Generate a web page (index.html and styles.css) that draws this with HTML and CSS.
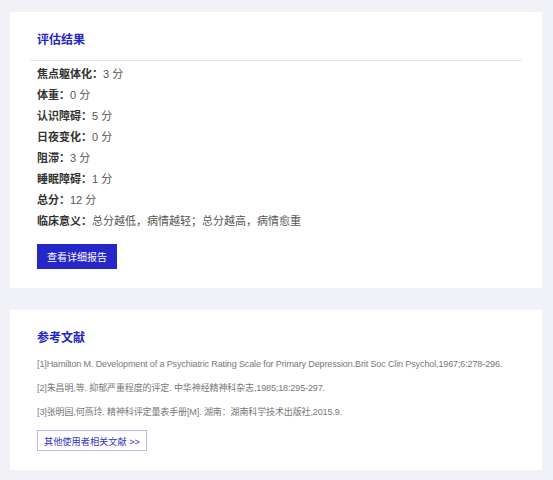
FILE: index.html
```html
<!DOCTYPE html>
<html lang="zh">
<head>
<meta charset="utf-8">
<link rel="stylesheet" href="styles.css">
</head>
<body>
<div class="page">
  <section class="card">
    <h2 class="card-title with-line">评估结果</h2>
    <div class="rows">
      <div class="row"><span class="label">焦点躯体化：</span><span class="value">3 分</span></div>
      <div class="row"><span class="label">体重：</span><span class="value">0 分</span></div>
      <div class="row"><span class="label">认识障碍：</span><span class="value">5 分</span></div>
      <div class="row"><span class="label">日夜变化：</span><span class="value">0 分</span></div>
      <div class="row"><span class="label">阻滞：</span><span class="value">3 分</span></div>
      <div class="row"><span class="label">睡眠障碍：</span><span class="value">1 分</span></div>
      <div class="row"><span class="label">总分：</span><span class="value">12 分</span></div>
      <div class="row"><span class="label">临床意义：</span><span class="value">总分越低，病情越轻；总分越高，病情愈重</span></div>
    </div>
    <button class="btn-primary">查看详细报告</button>
  </section>
  <section class="card">
    <h2 class="card-title">参考文献</h2>
    <div class="refs">
      <p class="ref">[1]Hamilton M. Development of a Psychiatric Rating Scale for Primary Depression.Brit Soc Clin Psychol,1967;6:278-296.</p>
      <p class="ref">[2]朱昌明,等. 抑郁严重程度的评定. 中华神经精神科杂志,1985;18:295-297.</p>
      <p class="ref">[3]张明园,何燕玲. 精神科评定量表手册[M]. 湖南：湖南科学技术出版社,2015.9.</p>
    </div>
    <button class="btn-outline">其他使用者相关文献 &gt;&gt;</button>
  </section>
</div>
</body>
</html>
```
FILE: styles.css
```css
* { box-sizing: border-box; }
html, body { margin: 0; padding: 0; }
body {
  background: #f1f2f7;
  font-family: "Liberation Sans", Arial, "Noto Sans CJK SC", sans-serif;
  width: 553px;
  height: 480px;
  overflow: hidden;
}
.page {
  padding: 12px 11px 10px 10px;
  display: flex;
  flex-direction: column;
  gap: 22px;
}
.card {
  background: #fff;
  padding: 20px 20px 19px;
}
.card-title {
  margin: 0;
  padding: 0 7px;
  font-size: 12px;
  line-height: 16px;
  font-weight: bold;
  color: #2424c8;
}
.card-title.with-line {
  padding-bottom: 12px;
  border-bottom: 1px solid #e6e6e6;
}
.rows {
  margin-top: 3px;
  padding: 0 7px;
}
.row {
  font-size: 11px;
  line-height: 21px;
}
.label { font-weight: bold; color: #333; }
.value { color: #555; }
.btn-primary {
  margin: 12px 0 0 7px;
  display: block;
  width: 80px;
  height: 25px;
  padding: 0;
  border: none;
  background: #2626c9;
  color: #fff;
  font-family: inherit;
  font-size: 10px;
}
.refs {
  margin-top: 6px;
  padding: 0 7px;
}
.ref {
  margin: 0;
  font-size: 9px;
  letter-spacing: -0.12px;
  line-height: 24px;
  color: #777;
  white-space: nowrap;
}
.btn-outline {
  margin: 6px 0 0 7px;
  display: block;
  height: 21px;
  padding: 0 6px;
  border: 1px solid #b9b9ee;
  background: #fff;
  color: #3333c0;
  font-family: inherit;
  font-size: 9.2px;
}
```
